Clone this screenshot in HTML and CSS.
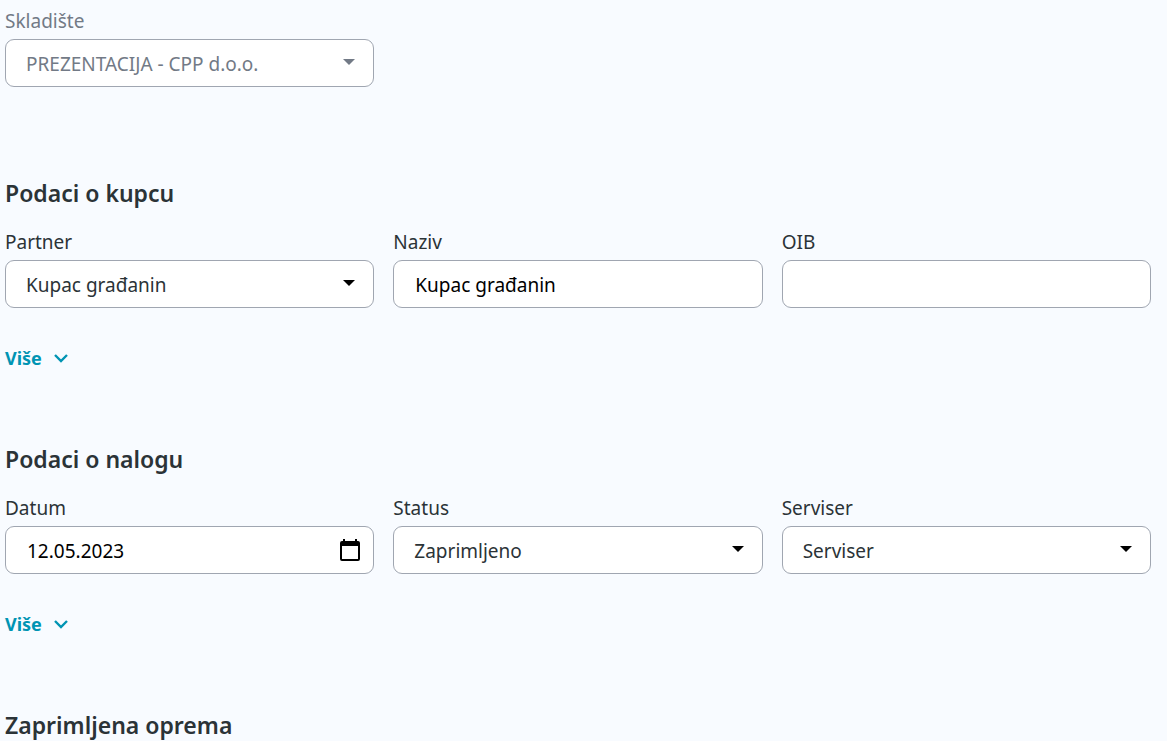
FILE: index.html
```html
<!DOCTYPE html>
<html lang="hr">
<head>
    <meta charset="UTF-8">
    <meta name="viewport" content="width=device-width, initial-scale=1.0">
    <title>Servisni nalog</title>
    <link rel="stylesheet" href="styles.css">
</head>
<body>
    <form class="order-form">
        <section class="section">
            <div class="form-row">
                <div class="form-group disabled">
                    <label for="warehouse">Skladište</label>
                    <div class="control">
                        <select id="warehouse" class="form-input" disabled>
                            <option>PREZENTACIJA - CPP d.o.o.</option>
                        </select>
                        <svg class="caret" viewBox="0 0 12 6" aria-hidden="true"><path d="M0 0h12L6 6z"/></svg>
                    </div>
                </div>
            </div>
        </section>

        <section class="section">
            <h2>Podaci o kupcu</h2>
            <div class="form-row">
                <div class="form-group">
                    <label for="partner">Partner</label>
                    <div class="control">
                        <select id="partner" class="form-input">
                            <option>Kupac građanin</option>
                        </select>
                        <svg class="caret" viewBox="0 0 12 6" aria-hidden="true"><path d="M0 0h12L6 6z"/></svg>
                    </div>
                </div>
                <div class="form-group">
                    <label for="name">Naziv</label>
                    <input type="text" id="name" class="form-input" value="Kupac građanin">
                </div>
                <div class="form-group">
                    <label for="oib">OIB</label>
                    <input type="text" id="oib" class="form-input">
                </div>
            </div>
            <button type="button" class="more-btn">
                Više
                <svg class="chevron" viewBox="0 0 14 9" aria-hidden="true"><path d="M1 1l6 6 6-6"/></svg>
            </button>
        </section>

        <section class="section">
            <h2>Podaci o nalogu</h2>
            <div class="form-row">
                <div class="form-group">
                    <label for="date">Datum</label>
                    <div class="control">
                        <input type="text" id="date" class="form-input" value="12.05.2023">
                        <button type="button" class="calendar-btn" aria-label="Odaberi datum">
                            <svg viewBox="0 0 20 22" aria-hidden="true">
                                <path d="M3 0h2v2h10V0h2v2h1a2 2 0 0 1 2 2v16a2 2 0 0 1-2 2H2a2 2 0 0 1-2-2V4a2 2 0 0 1 2-2h1zM2 7v13h16V7z"/>
                            </svg>
                        </button>
                    </div>
                </div>
                <div class="form-group">
                    <label for="status">Status</label>
                    <div class="control">
                        <select id="status" class="form-input">
                            <option>Zaprimljeno</option>
                        </select>
                        <svg class="caret" viewBox="0 0 12 6" aria-hidden="true"><path d="M0 0h12L6 6z"/></svg>
                    </div>
                </div>
                <div class="form-group">
                    <label for="technician">Serviser</label>
                    <div class="control">
                        <select id="technician" class="form-input">
                            <option>Serviser</option>
                        </select>
                        <svg class="caret" viewBox="0 0 12 6" aria-hidden="true"><path d="M0 0h12L6 6z"/></svg>
                    </div>
                </div>
            </div>
            <button type="button" class="more-btn">
                Više
                <svg class="chevron" viewBox="0 0 14 9" aria-hidden="true"><path d="M1 1l6 6 6-6"/></svg>
            </button>
        </section>

        <section class="section">
            <h2>Zaprimljena oprema</h2>
        </section>
    </form>
</body>
</html>
```

FILE: styles.css
```css
* {
    margin: 0;
    padding: 0;
    box-sizing: border-box;
}

body {
    background: #f8fbff;
    color: #2b3337;
    font-family: "Noto Sans", "Open Sans", sans-serif;
    font-size: 19px;
    line-height: 24px;
}

.order-form {
    padding: 9px 16px 0 5px;
}

.section {
    margin-bottom: 74px;
}

.section:first-child {
    margin-bottom: 91px;
}

.section:last-child {
    margin-bottom: 0;
}

h2 {
    margin-bottom: 22px;
    font-size: 23px;
    font-weight: 600;
    line-height: 30px;
}

.form-row {
    display: grid;
    grid-template-columns: repeat(3, 1fr);
    gap: 19px;
}

.form-group label {
    display: block;
    margin-bottom: 6px;
}

.control {
    position: relative;
}

.form-input {
    display: block;
    width: 100%;
    height: 48px;
    padding: 2px 48px 0 21px;
    background: white;
    border: 1px solid #a0a6b1;
    border-radius: 9px;
    color: black;
    font: inherit;
    outline: none;
}

.form-input:focus {
    border-color: #0094b3;
}

select.form-input {
    appearance: none;
    padding-left: 20px;
    color: #2b3337;
}

.disabled label,
select.form-input:disabled {
    color: #727a86;
    opacity: 1;
}

.caret {
    position: absolute;
    top: 20px;
    right: 19px;
    width: 12px;
    height: 6px;
    pointer-events: none;
}

.disabled .caret {
    fill: #727a86;
}

.calendar-btn {
    position: absolute;
    top: 13px;
    right: 14px;
    width: 20px;
    height: 22px;
    background: none;
    border: none;
    cursor: pointer;
}

.calendar-btn svg {
    display: block;
}

.more-btn {
    display: flex;
    align-items: center;
    gap: 12px;
    margin-top: 38px;
    background: none;
    border: none;
    color: #0094b3;
    font: inherit;
    font-size: 18px;
    font-weight: 700;
    cursor: pointer;
}

.chevron {
    width: 14px;
    height: 9px;
    fill: none;
    stroke: currentColor;
    stroke-width: 2.4;
}
```
